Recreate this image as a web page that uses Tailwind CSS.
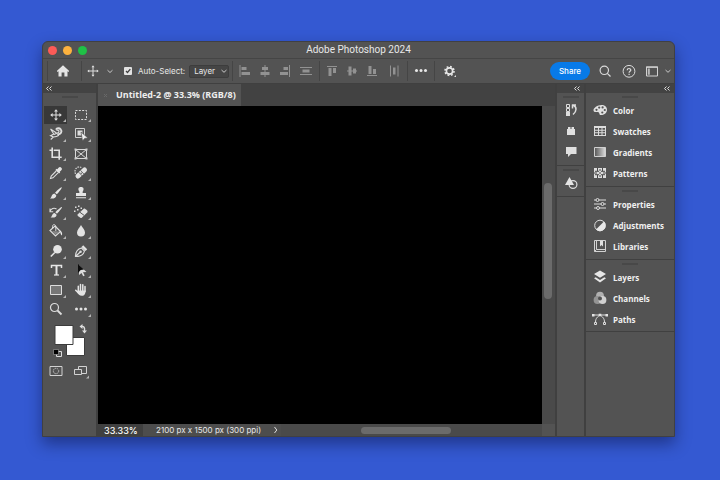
<!DOCTYPE html>
<html lang="en">
<head>
<meta charset="utf-8">
<title>Adobe Photoshop 2024</title>
<script src="https://cdn.jsdelivr.net/npm/@tailwindcss/browser@4"></script>
</head>
<body class="h-screen overflow-hidden bg-[#3459d2] pt-[41px] pr-[45px] pb-[43px] pl-[42px] font-['Inter',sans-serif] text-[#e8e8e8]">
<main class="flex h-full flex-col overflow-hidden rounded-t-md border border-[#404043] bg-[#535353] shadow-[0_7px_16px_rgba(0,0,30,0.4)]">

<!-- Title bar -->
<header class="grid h-[17px] shrink-0 grid-cols-[1fr_auto_1fr] items-center border-b border-[#454545]">
  <div class="flex gap-[6px] pl-[5px]">
    <button aria-label="Close" class="size-[9px] rounded-full bg-[#fc5b57]"></button>
    <button aria-label="Minimize" class="size-[9px] rounded-full bg-[#fdb23e]"></button>
    <button aria-label="Zoom" class="size-[9px] rounded-full bg-[#1fc146]"></button>
  </div>
  <h1 class="font-['Roboto',sans-serif] text-[10px] leading-4">Adobe Photoshop 2024</h1>
</header>

<!-- Options bar -->
<div class="flex h-[25px] shrink-0 items-center border-b border-[#404040] pl-1">
  <i class="h-5 w-px bg-[#454545]"></i>
  <button aria-label="Home" class="ml-[7px]"><svg class="size-4" viewBox="0 0 16 16" fill="#e4e4e4"><path d="M8 2.300 14.200 8l-.7.9-1-.7V13.500H9.400V9.500H6.600v4H3.500V8.200l-1 .7L1.800 8z"/></svg></button>
  <i class="ml-[10px] h-5 w-px bg-[#454545]"></i>
  <button aria-label="Move tool" class="ml-[3px]"><svg class="size-4" viewBox="0 0 16 16" fill="none" stroke="#dcdcdc"><path d="M8 3v10M3 8h10"/><path d="M8 2.300 6.500 4.200h3zM8 13.700l-1.500-1.900h3zM2.300 8l1.900-1.500v3zM13.700 8l-1.900-1.500v3z" fill="#dcdcdc" stroke="none"/></svg></button>
  <button aria-label="Tool presets" class="ml-[5px]"><svg class="h-4 w-2" viewBox="0 0 8 16" fill="none" stroke="#c8c8c8"><path d="m1.500 7.200 2.500 2.300 2.500-2.300"/></svg></button>
  <input id="auto" type="checkbox" checked class="peer sr-only">
  <label for="auto" class="ml-[10px] flex items-center text-[8px] leading-3"><svg class="mr-[6px] size-2" viewBox="0 0 8 8"><rect width="8" height="8" rx="1" fill="#e2e2e2"/><path d="m2 4 1.500 1.500L6.300 2.200" fill="none" stroke="#404040" stroke-width="1.300"/></svg>Auto-Select:</label>
  <div class="relative ml-1 flex items-center">
    <select aria-label="Auto-select target" class="h-[13px] w-10 appearance-none rounded-[2px] border border-[#3d3d3d] bg-[#454545] pl-1 text-[8px] leading-[11px]"><option>Layer</option><option>Group</option></select>
    <svg class="pointer-events-none absolute right-[1px] h-2 w-2" viewBox="0 0 8 8" fill="none" stroke="#c8c8c8"><path d="m1.500 3 2.500 2.300L6.500 3"/></svg>
  </div>
  <i class="ml-[3px] h-5 w-px bg-[#454545]"></i>
  <div class="ml-1 flex gap-1">
    <button aria-label="Align left edges"><svg class="size-4" viewBox="0 0 16 16" fill="#929292"><path d="M2.500 2h1v12h-1zM4.500 4h5v3h-5zM4.500 9h8.500v3H4.500z"/></svg></button>
    <button aria-label="Align horizontal centers"><svg class="size-4" viewBox="0 0 16 16" fill="#929292"><path d="M7.500 2h1v12h-1zM5 4h6v3H5zM3.500 9h9v3h-9z"/></svg></button>
    <button aria-label="Align right edges"><svg class="size-4" viewBox="0 0 16 16" fill="#929292"><path d="M12 2h1v12h-1zM6.500 4h4.500v3H6.500zM3 9h8v3H3z"/></svg></button>
  </div>
  <button aria-label="Distribute vertically" class="ml-[5px]"><svg class="size-4" viewBox="0 0 16 16" fill="#929292"><path d="M2 4h12v1H2zM4.500 6.500h7v3h-7zM2 11h12v1H2z"/></svg></button>
  <i class="ml-[5px] h-5 w-px bg-[#454545]"></i>
  <div class="ml-1 flex gap-1">
    <button aria-label="Align top edges"><svg class="size-4" viewBox="0 0 16 16" fill="#929292"><path d="M3 3h10v1H3zM4.500 5h3v8h-3zM9 5h3v5H9z"/></svg></button>
    <button aria-label="Align vertical centers"><svg class="size-4" viewBox="0 0 16 16" fill="#929292"><path d="M3 7.500h10v1H3zM4.500 3.500h3v9h-3zM9 5.500h3v5H9z"/></svg></button>
    <button aria-label="Align bottom edges"><svg class="size-4" viewBox="0 0 16 16" fill="#929292"><path d="M3 12h10v1H3zM4.500 3h3v8h-3zM9 6h3v5H9z"/></svg></button>
  </div>
  <button aria-label="Distribute horizontally" class="ml-[6px]"><svg class="size-4" viewBox="0 0 16 16" fill="#929292"><path d="M4 2.500h1v11H4zM7 4.500h2.500v7H7zM11.500 2.500h1v11h-1z"/></svg></button>
  <i class="ml-[5px] h-5 w-px bg-[#454545]"></i>
  <button aria-label="More options" class="ml-[5px]"><svg class="size-4" viewBox="0 0 16 16" fill="#e8e8e8"><circle cx="3.500" cy="7.500" r="1.500"/><circle cx="8" cy="7.500" r="1.500"/><circle cx="12.500" cy="7.500" r="1.500"/></svg></button>
  <i class="ml-[5px] h-5 w-px bg-[#454545]"></i>
  <button aria-label="Settings" class="ml-[7px]"><svg class="size-4" viewBox="0 0 16 16"><circle cx="7.500" cy="8" r="3.100" fill="none" stroke="#e6e6e6" stroke-width="1.600"/><circle cx="7.500" cy="8" r="4.500" fill="none" stroke="#e6e6e6" stroke-width="1.600" stroke-dasharray="1.767 1.767"/><path d="M14 12v2h-2z" fill="#ddd"/></svg></button>
  <div class="ml-auto flex items-center pr-[2px]">
    <button class="mr-[7px] h-[18px] w-10 rounded-full bg-[#087ae8] text-[8px] font-medium text-white">Share</button>
    <button aria-label="Search"><svg class="mr-2 size-4" viewBox="0 0 16 16" fill="none" stroke="#dadada" stroke-width="1.200"><circle cx="7.300" cy="7.300" r="4.200"/><path d="m10.300 10.300 3.200 3.200"/></svg></button>
    <button aria-label="Help"><svg class="mr-[7px] size-4" viewBox="0 0 16 16" fill="none" stroke="#dadada"><circle cx="8" cy="8.300" r="5.900"/><path d="M6.200 7.300c0-2.400 3.600-2.300 3.600-.2 0 1.300-1.700 1.200-1.700 2.700M8.100 10.700v1.200" stroke-width="1.200"/></svg></button>
    <button aria-label="Workspace"><svg class="mr-1 size-4" viewBox="0 0 16 16"><path d="M2.500 4h11v9h-11z" fill="none" stroke="#d2d2d2"/><path d="M3.800 5.500h2v6.200h-2z" fill="#bbb"/><path d="M2 3.500h12v1.300H2z" fill="#d2d2d2"/></svg></button>
    <button aria-label="Workspace menu"><svg class="h-4 w-2" viewBox="0 0 8 16" fill="none" stroke="#c8c8c8"><path d="m1.500 7 2.500 2.300L6.500 7"/></svg></button>
  </div>
</div>

<div class="flex min-h-0 flex-1">

<!-- Tools -->
<aside class="w-[55px] shrink-0 border-r-2 border-[#404040]">
  <button aria-label="Collapse tools" class="flex h-[9px] w-full items-center bg-[#434343] pl-[3px]"><svg class="h-[5px] w-[6px]" viewBox="0 0 6 5" fill="none" stroke="#ddd"><path d="M2.500.5l-2 2 2 2M5.500.5l-2 2 2 2"/></svg></button>
  <div class="mx-auto mt-[3px] h-[2px] w-4 bg-[#484848]"></div>
  <!-- Each tool that holds a flyout carries a small corner mark -->
  <div class="mt-[7px] grid h-[214px] grid-cols-[25px_25px] grid-rows-11 [&>button]:relative [&>button]:after:absolute [&>button]:after:right-[2px] [&>button]:after:bottom-[2px] [&>button]:after:border-t-[3px] [&>button]:after:border-r-[3px] [&>button]:after:border-t-transparent [&>button]:after:border-r-[#b4b4b4]">
    <button aria-label="Move" class="flex items-center justify-center"><span class="flex h-[18px] w-[23px] items-center justify-center bg-[#383838]"><svg class="size-4" viewBox="0 0 16 16" fill="#e0e0e0"><path d="M7.500 4h1v3.500H12v1H8.500V12h-1V8.500H4v-1h3.500z"/><path d="M8 2.200 6 4.600h4zM8 13.800l-2-2.400h4zM2.200 8l2.400-2v4zM13.800 8l-2.400-2v4z"/></svg></span></button>
    <button aria-label="Rectangular marquee" class="flex items-center justify-center"><svg class="size-4" viewBox="0 0 16 16" fill="none" stroke="#ddd"><path d="M2.500 3.500h11v9h-11z" stroke-dasharray="2 1.330"/></svg></button>
    <button aria-label="Lasso" class="flex items-center justify-center"><svg class="size-4" viewBox="0 0 16 16" fill="none" stroke="#ddd" stroke-width="1.100"><path d="m2.500 3 6 4M2.500 3l3.300 5L2.500 9.700l3 1.300-2.800 2.500M5.500 11c2.400 0 4-.7 5.500-1.700"/><path d="M8 3.700C8.800 2 11.400 1.800 12.700 3.300c1.700 2 .3 5.400-3.400 5" stroke-width="1.900"/><path d="M8.500 4.500c2-1 3.200.2 2 2L6 8.500"/></svg></button>
    <button aria-label="Object selection" class="flex items-center justify-center"><svg class="size-4" viewBox="0 0 16 16"><path d="M2.500 2.500h9v9h-9z" fill="none" stroke="#d0d0d0"/><path d="M4.500 4.500h5v5h-5z" fill="#ddd"/><path d="m8 6 7 6-3.300.4L9.500 15z" fill="#eee" stroke="#535353" stroke-width=".7"/></svg></button>
    <button aria-label="Crop" class="flex items-center justify-center"><svg class="size-4" viewBox="0 0 16 16" fill="none" stroke="#e2e2e2" stroke-width="1.600"><path d="M4.200 1.500v9.800h6.500M1.500 4.200h2M5.700 4.200h5.500v9.500M12 11.300h1.700"/></svg></button>
    <button aria-label="Frame" class="flex items-center justify-center after:hidden"><svg class="size-4" viewBox="0 0 16 16" fill="none" stroke="#d8d8d8"><path d="M2.500 3.500h11v9h-11zM2.500 3.500l11 9M13.500 3.500l-11 9"/><path d="M1.500 2.500h2v2h-2zM12.500 2.500h2v2h-2zM1.500 11.500h2v2h-2zM12.500 11.500h2v2h-2z" fill="#ccc" stroke="none"/></svg></button>
    <button aria-label="Eyedropper" class="flex items-center justify-center"><svg class="size-4" viewBox="0 0 16 16"><path d="M13.300 2.700c1.200 1.200.5 2.200-.4 3l-1.200 1 .5.700-1.200 1.200-3.600-3.600 1.200-1.200.7.500 1-1.200c.8-.9 1.900-1.500 3-.4z" fill="#e4e4e4"/><path d="m8.200 6-5 5-.7 2.500 2.500-.7 5-5" fill="none" stroke="#ddd" stroke-width="1.100"/></svg></button>
    <button aria-label="Spot healing brush" class="flex items-center justify-center"><svg class="size-4" viewBox="0 0 16 16"><path d="M2.500 9C.5 4 5 .3 8.500 2.700" fill="none" stroke="#d4d4d4" stroke-width="1.200" stroke-dasharray="1.500 1"/><path d="M5 11 11.500 5" stroke="#e2e2e2" stroke-width="5" stroke-linecap="round"/><path d="m5.500 7 3.800 4M7.500 5.300l3.600 4" stroke="#535353" stroke-width=".8"/><circle cx="8.200" cy="8.200" r=".7" fill="#535353"/></svg></button>
    <button aria-label="Brush" class="flex items-center justify-center"><svg class="size-4" viewBox="0 0 16 16" fill="#e4e4e4"><path d="M13.800 2.300c.6.600-3 5-5 7L7 7.700c2-2.200 6.200-6 6.800-5.400zM6.400 8.400l1.900 1.800c0 3-3 3.800-6.300 3.200C4 12.600 3 9.300 6.400 8.400z"/></svg></button>
    <button aria-label="Clone stamp" class="flex items-center justify-center"><svg class="size-4" viewBox="0 0 16 16" fill="#e4e4e4"><path d="M8 2c3 0 3 2.500 2 4-.5.800-.5 1.500-.3 2H13v3H3V8h3.300c.2-.5.200-1.200-.3-2-1-1.500-1-4 2-4zM3 12.200h10v1H3z"/></svg></button>
    <button aria-label="History brush" class="flex items-center justify-center"><svg class="size-4" viewBox="0 0 16 16" fill="#e0e0e0"><path d="M14 3c.6.600-3 4.700-5 6.700L7.300 8.200C9.300 6 13.500 2.300 14 3zM6.700 9l1.900 1.800c0 2.600-3 3.200-6 2.600 1.800-.8 1-3.700 4.100-4.400z"/><path d="M2 7.500C3 4.500 6 3.500 8.500 5M2 4.500v3.300h3.200" fill="none" stroke="#ddd" stroke-width="1.100"/></svg></button>
    <button aria-label="Eraser" class="flex items-center justify-center"><svg class="size-4" viewBox="0 0 16 16"><path d="m4.500 10.500 6.500-6c.5-.4 3.500 1.800 3.500 2.500v1.300L8.500 14c-.6.500-4-2-4-2.700z" fill="#e0e0e0"/><path d="m7 8.300 4 3" stroke="#535353"/><path d="M2 2.500h1.500V4H2zM5 1.500h1.500V3H5zM4 5h1.500v1.500H4zM7.500 3.500H9V5H7.500zM1 6.500h1.500V8H1z" fill="#ddd"/></svg></button>
    <button aria-label="Paint bucket" class="flex items-center justify-center"><svg class="size-4" viewBox="0 0 16 16"><path d="m7 3 5.500 5.500-5 4.500-5.500-5.500z" fill="none" stroke="#ddd" stroke-width="1.200"/><path d="m4 8 7.500.5-4.200 3.300z" fill="#888"/><path d="M7.800 8V3.500C7.500 1 4.500 1 4.500 3.500v2" fill="none" stroke="#ddd"/><path d="M12.300 7.500c1.700 1.500 2.200 3 1.500 5-1-.8-1.800-3-1.500-5z" fill="#eee"/></svg></button>
    <button aria-label="Blur" class="flex items-center justify-center"><svg class="size-4" viewBox="0 0 16 16"><path d="M8 2c1 2.500 4 4.600 4 7.500a4 4 0 0 1-8 0C4 6.600 7 4.500 8 2z" fill="#e2e2e2"/></svg></button>
    <button aria-label="Dodge" class="flex items-center justify-center"><svg class="size-4" viewBox="0 0 16 16"><circle cx="9.500" cy="6.300" r="4.300" fill="#e4e4e4"/><path d="m6.800 9.500-4 4" stroke="#e4e4e4" stroke-width="1.600"/></svg></button>
    <button aria-label="Pen" class="flex items-center justify-center"><svg class="size-4" viewBox="0 0 16 16"><path d="M2.500 13.500c0-4.500 2-7.500 6-8.500l3 3c-.7 3.500-3.500 5.500-9 5.500zm0 0L7.200 9" fill="none" stroke="#ddd" stroke-width="1.200"/><circle cx="7.600" cy="8.700" r="1.200" fill="#ddd"/><path d="m8.500 4 1.700-1.700 4 4L12.500 8z" fill="#e2e2e2"/></svg></button>
    <button aria-label="Type" class="flex items-center justify-center"><svg class="size-4" viewBox="0 0 16 16" fill="none" stroke="#e6e6e6"><path d="M3.500 6V3.500h10V6" stroke-width="1.500"/><path d="M8.500 3v10" stroke-width="2"/><path d="M6 13h5" stroke-width="1.200"/></svg></button>
    <button aria-label="Path selection" class="flex items-center justify-center"><svg class="size-4" viewBox="0 0 16 16"><path d="m6 3 7.500 7-3.500.3 1.700 3.200-1.500.8-1.700-3.400L6 13z" fill="#dedede"/><path d="m5 2 6 5.500-3.300.5L5 11z" fill="#0c0c0c"/></svg></button>
    <button aria-label="Rectangle" class="flex items-center justify-center"><svg class="size-4" viewBox="0 0 16 16"><path d="M2.500 3.500h11v9h-11z" fill="#777" stroke="#ddd"/></svg></button>
    <button aria-label="Hand" class="flex items-center justify-center"><svg class="size-4" viewBox="0 0 16 16" fill="none" stroke="#e4e4e4" stroke-linecap="round"><path d="M5.300 4.300v5M7.500 2.500v6M9.800 2.700v6M12 4.500v5M2.700 8.200 5.500 11" stroke-width="1.500"/><path d="M4.700 8.500h7.900c0 3-1 5.300-3.800 5.300-2.300 0-3.600-1.500-4.900-3.800z" fill="#e4e4e4" stroke="none"/></svg></button>
    <button aria-label="Zoom tool" class="flex items-center justify-center after:hidden"><svg class="size-4" viewBox="0 0 16 16" fill="none" stroke="#ddd"><circle cx="6.500" cy="6.500" r="4" stroke-width="1.200"/><path d="m9.500 9.500 4 4" stroke-width="1.800"/></svg></button>
    <button aria-label="Edit toolbar" class="flex items-center justify-center"><svg class="size-4" viewBox="0 0 16 16" fill="#e4e4e4"><circle cx="3.500" cy="8" r="1.500"/><circle cx="8" cy="8" r="1.500"/><circle cx="12.500" cy="8" r="1.500"/></svg></button>
  </div>
  <svg class="mt-[3px] ml-[9px] block" width="36" height="36" viewBox="0 0 36 36" role="img" aria-label="Foreground and background colors">
    <path d="M14.500 15.500h18v18h-18z" fill="#fff" stroke="#3c3c3c"/><path d="M3 3.500h18v19H3z" fill="#fff" stroke="#3c3c3c"/>
    <path d="M29 4.500c3-.5 4 1 3.500 4.500" fill="none" stroke="#ddd" stroke-width="1.400"/><path d="m27.500 4.500 3-2.500v5zM32.500 11.500 30 8.500h5z" fill="#ddd"/>
    <path d="M4.500 29.500h5v5h-5z" fill="#555" stroke="#ddd"/><path d="M1.500 27.500h5v5h-5z" fill="#000" stroke="#aaa" stroke-width=".6"/>
  </svg>
  <div class="mt-[5px] grid grid-cols-[25px_25px] justify-items-center">
    <button aria-label="Quick mask"><svg class="size-4" viewBox="0 0 16 16"><path d="M2 3.500h12v9H2z" fill="none" stroke="#d2d2d2"/><circle cx="8" cy="8" r="2.700" fill="none" stroke="#bbb" stroke-dasharray="1.500 .7"/></svg></button>
    <button aria-label="Screen mode"><svg class="size-4" viewBox="0 0 16 16"><path d="M5.500 3.500h8v7h-8z" fill="#555" stroke="#d2d2d2"/><path d="M1.500 6.500h7v5h-7z" fill="#555" stroke="#d2d2d2"/><path d="M16 12.500v3h-3z" fill="#b4b4b4"/></svg></button>
  </div>
</aside>

<!-- Document -->
<section class="flex min-w-0 flex-1 flex-col">
  <div class="flex h-[22px] shrink-0 bg-[#424242]">
    <div class="flex items-center bg-[#535353] pr-[5px] pl-[5px] font-['Open_Sans',sans-serif] text-[9px] leading-3 font-bold text-[#eee]">
      <button aria-label="Close tab" class="mr-2"><svg class="size-[5px]" viewBox="0 0 5 5" stroke="#686868"><path d="m1 1 3 3M4 1 1 4"/></svg></button>Untitled-2 @ 33.3% (RGB/8)
    </div>
  </div>
  <div class="flex min-h-0 flex-1">
    <div class="flex-1 bg-black"></div>
    <div class="w-[13px] bg-[#4a4a4a] px-[2px] pt-[77px]"><div class="h-[116px] w-2 rounded-full bg-[#6b6b6b]"></div></div>
  </div>
  <footer class="flex h-3 shrink-0 items-center bg-[#4a4a4a] leading-3">
    <span class="h-3 w-[45px] bg-[#404040] pl-[6px] text-[9px] font-medium leading-[14px] text-white">33.33%</span>
    <button class="flex h-3 w-[138px] items-center justify-between bg-[#4d4d4d] pl-[13px] text-[8px]">2100 px x 1500 px (300 ppi)<svg class="mr-[2px] h-2 w-[6px]" viewBox="0 0 6 8" fill="none" stroke="#ddd"><path d="m1.500 1 2.300 3-2.300 3"/></svg></button>
    <div class="flex flex-1 pl-20"><div class="h-[7px] w-[90px] rounded-full bg-[#6b6b6b]"></div></div>
    <div class="h-full w-[13px] bg-[#535353]"></div>
  </footer>
</section>

<!-- Collapsed panels -->
<aside class="flex w-[29px] shrink-0 flex-col border-l-2 border-[#404040]">
  <button aria-label="Expand panels" class="flex h-[9px] shrink-0 items-center justify-end bg-[#434343] pr-1"><svg class="h-[5px] w-[6px]" viewBox="0 0 6 5" fill="none" stroke="#ddd"><path d="M2.500.5l-2 2 2 2M5.500.5l-2 2 2 2"/></svg></button>
  <div class="flex flex-col items-center border-b border-[#404040] pt-[3px] pb-[3px]">
    <i class="mb-px h-[2px] w-4 bg-[#484848]"></i>
    <button aria-label="History" class="flex h-[21px] items-center"><svg class="size-4" viewBox="0 0 16 16" fill="none" stroke="#ddd"><path d="M3.500 2.500h3v3h-3zM3.500 6.500h3v3h-3z"/><path d="M3 10h4v4H3z" fill="#ddd" stroke="none"/><path d="M9 3h4M9.500 2.500v4M10 3c4 2 4 6 0 9.500" stroke-width="1.500"/></svg></button>
    <button aria-label="Plugins" class="flex h-[21px] items-center"><svg class="size-4" viewBox="0 0 16 16" fill="#e0e0e0"><path d="M4 6h1V4h2.500v2h1V4H11v2h1v6H4z"/></svg></button>
    <button aria-label="Comments" class="flex h-[21px] items-center"><svg class="size-4" viewBox="0 0 16 16" fill="#e0e0e0"><path d="M3 3h10.500v7H8l-3 3v-3H3z"/></svg></button>
  </div>
  <div class="flex flex-col items-center border-b border-[#404040] pt-[3px] pb-[3px]">
    <i class="mb-px h-[2px] w-4 bg-[#484848]"></i>
    <button aria-label="Shapes" class="flex h-[21px] items-center"><svg class="size-4" viewBox="0 0 16 16"><circle cx="10" cy="9.500" r="3.900" fill="none" stroke="#ddd" stroke-width="1.200"/><path d="m6.500 2 4.500 8H2z" fill="#e4e4e4"/></svg></button>
  </div>
</aside>

<!-- Panels -->
<aside class="w-[90px] shrink-0 border-l-2 border-[#404040] font-['Open_Sans',sans-serif] text-[8px] font-bold text-[#f0f0f0]">
  <button aria-label="Collapse panels" class="flex h-[9px] w-full items-center justify-end bg-[#434343] pr-1"><svg class="h-[5px] w-[6px]" viewBox="0 0 6 5" fill="none" stroke="#ddd"><path d="M2.500.5l-2 2 2 2M5.500.5l-2 2 2 2"/></svg></button>
  <div class="border-b border-[#404040] pb-[2px]">
    <div class="mx-auto mt-[3px] mb-[2px] h-[2px] w-4 bg-[#484848]"></div>
    <button class="flex h-[21px] w-full items-center gap-[5px] pl-[6px]"><svg class="size-4" viewBox="0 0 16 16"><path d="M9.500 2c3.200 0 5.500 1.700 5.500 4.700 0 3.700-3.500 5.500-6.300 5.300-1.900-.2-.8-2.200-2.200-2.800C4.800 8.500 1.800 10 1.500 7.500 1.200 5 5.500 2 9.500 2z" fill="#e0e0e0"/><g fill="#535353"><circle cx="4.500" cy="6.800" r="1.100"/><circle cx="7.200" cy="4.600" r="1.100"/><circle cx="10.600" cy="4.400" r="1.100"/><circle cx="12.800" cy="7" r="1.100"/><circle cx="10.300" cy="9.500" r="1.100"/></g></svg>Color</button>
    <button class="flex h-[21px] w-full items-center gap-[5px] pl-[6px]"><svg class="size-4" viewBox="0 0 16 16"><path d="M2 2h12v10H2z" fill="#ddd"/><path d="M3 4h3v1.700H3zM7 4h2.500v1.700H7zM10.500 4H13v1.700h-2.500zM3 6.700h3v1.600H3zM7 6.700h2.500v1.600H7zM10.500 6.700H13v1.600h-2.500zM3 9.300h3V11H3zM7 9.300h2.500V11H7zM10.500 9.300H13V11h-2.500z" fill="#555"/></svg>Swatches</button>
    <button class="flex h-[21px] w-full items-center gap-[5px] pl-[6px]"><svg class="size-4" viewBox="0 0 16 16"><defs><linearGradient id="fade"><stop stop-color="#555"/><stop offset="1" stop-color="#ddd"/></linearGradient></defs><path d="M2.500 2.500h11v9h-11z" fill="url(#fade)" stroke="#d0d0d0"/></svg>Gradients</button>
    <button class="flex h-[21px] w-full items-center gap-[5px] pl-[6px]"><svg class="size-4" viewBox="0 0 16 16"><path d="M2 2h12v10H2z" fill="#ddd"/><path d="M5.500 2v3M5.500 9v3M10.500 2v3M10.500 9v3M3 5.300h4M9 5.300h4M3 8.700h4M9 8.700h4M8 3v2M8 6v2M8 9v2M2 7h3M11 7h3" stroke="#4a4a4a"/></svg>Patterns</button>
  </div>
  <div class="border-b border-[#404040] pb-[2px]">
    <div class="mx-auto mt-[3px] mb-[2px] h-[2px] w-4 bg-[#484848]"></div>
    <button class="flex h-[21px] w-full items-center gap-[5px] pl-[6px]"><svg class="size-4" viewBox="0 0 16 16" fill="#535353" stroke="#ddd"><path d="M2 3h12M2 7h12M2 11h12"/><circle cx="5.500" cy="3" r="1.500"/><circle cx="10.500" cy="7" r="1.500"/><circle cx="6" cy="11" r="1.500"/></svg>Properties</button>
    <button class="flex h-[21px] w-full items-center gap-[5px] pl-[6px]"><svg class="size-4" viewBox="0 0 16 16"><circle cx="8" cy="7.500" r="5.300" fill="none" stroke="#ddd"/><path d="M12 3.500a5.600 5.600 0 0 1-8 8z" fill="#e8e8e8"/></svg>Adjustments</button>
    <button class="flex h-[21px] w-full items-center gap-[5px] pl-[6px]"><svg class="size-4" viewBox="0 0 16 16" fill="none" stroke="#d2d2d2"><path d="M2.500 1.500h11v11h-11zM4.500 1.500v9h9M2.500 12.500l2-2"/><path d="M8 2h3v5.500L9.500 6 8 7.500z" fill="#e0e0e0" stroke="none"/></svg>Libraries</button>
  </div>
  <div class="border-b border-[#404040] pb-px">
    <div class="mx-auto mt-[3px] mb-[2px] h-[2px] w-4 bg-[#484848]"></div>
    <button class="flex h-[21px] w-full items-center gap-[5px] pl-[6px]"><svg class="size-4" viewBox="0 0 16 16" fill="#e6e6e6"><path d="m8 .5 6 3.500-6 3.700L2 4zM2 8.300l1.700-1L8 10l4.300-2.700 1.700 1L8 12.500z"/></svg>Layers</button>
    <button class="flex h-[21px] w-full items-center gap-[5px] pl-[6px]"><svg class="size-4" viewBox="0 0 16 16"><circle cx="8" cy="4.700" r="3.900" fill="#b0b0b0"/><circle cx="5.500" cy="9" r="3.900" fill="#949494"/><circle cx="10.500" cy="9" r="3.900" fill="#d0d0d0"/><circle cx="8" cy="7.600" r="2" fill="#505050"/></svg>Channels</button>
    <button class="flex h-[21px] w-full items-center gap-[5px] pl-[6px]"><svg class="size-4" viewBox="0 0 16 16" fill="none" stroke="#ddd"><path d="M1 3h14M3.500 10.500C3.500 6 5.500 5 8 3c2.500 2 4.500 3 4.500 7.500"/><path d="M0 2h2.500v2.500H0zM6.700 1.700h2.600v2.600H6.700zM13.500 2H16v2.500h-2.500z" fill="#e4e4e4" stroke="none"/><path d="M2.500 10.500h2v2h-2zM11.500 10.500h2v2h-2z" fill="#535353"/></svg>Paths</button>
  </div>
</aside>
</div>
</main>
</body>
</html>
